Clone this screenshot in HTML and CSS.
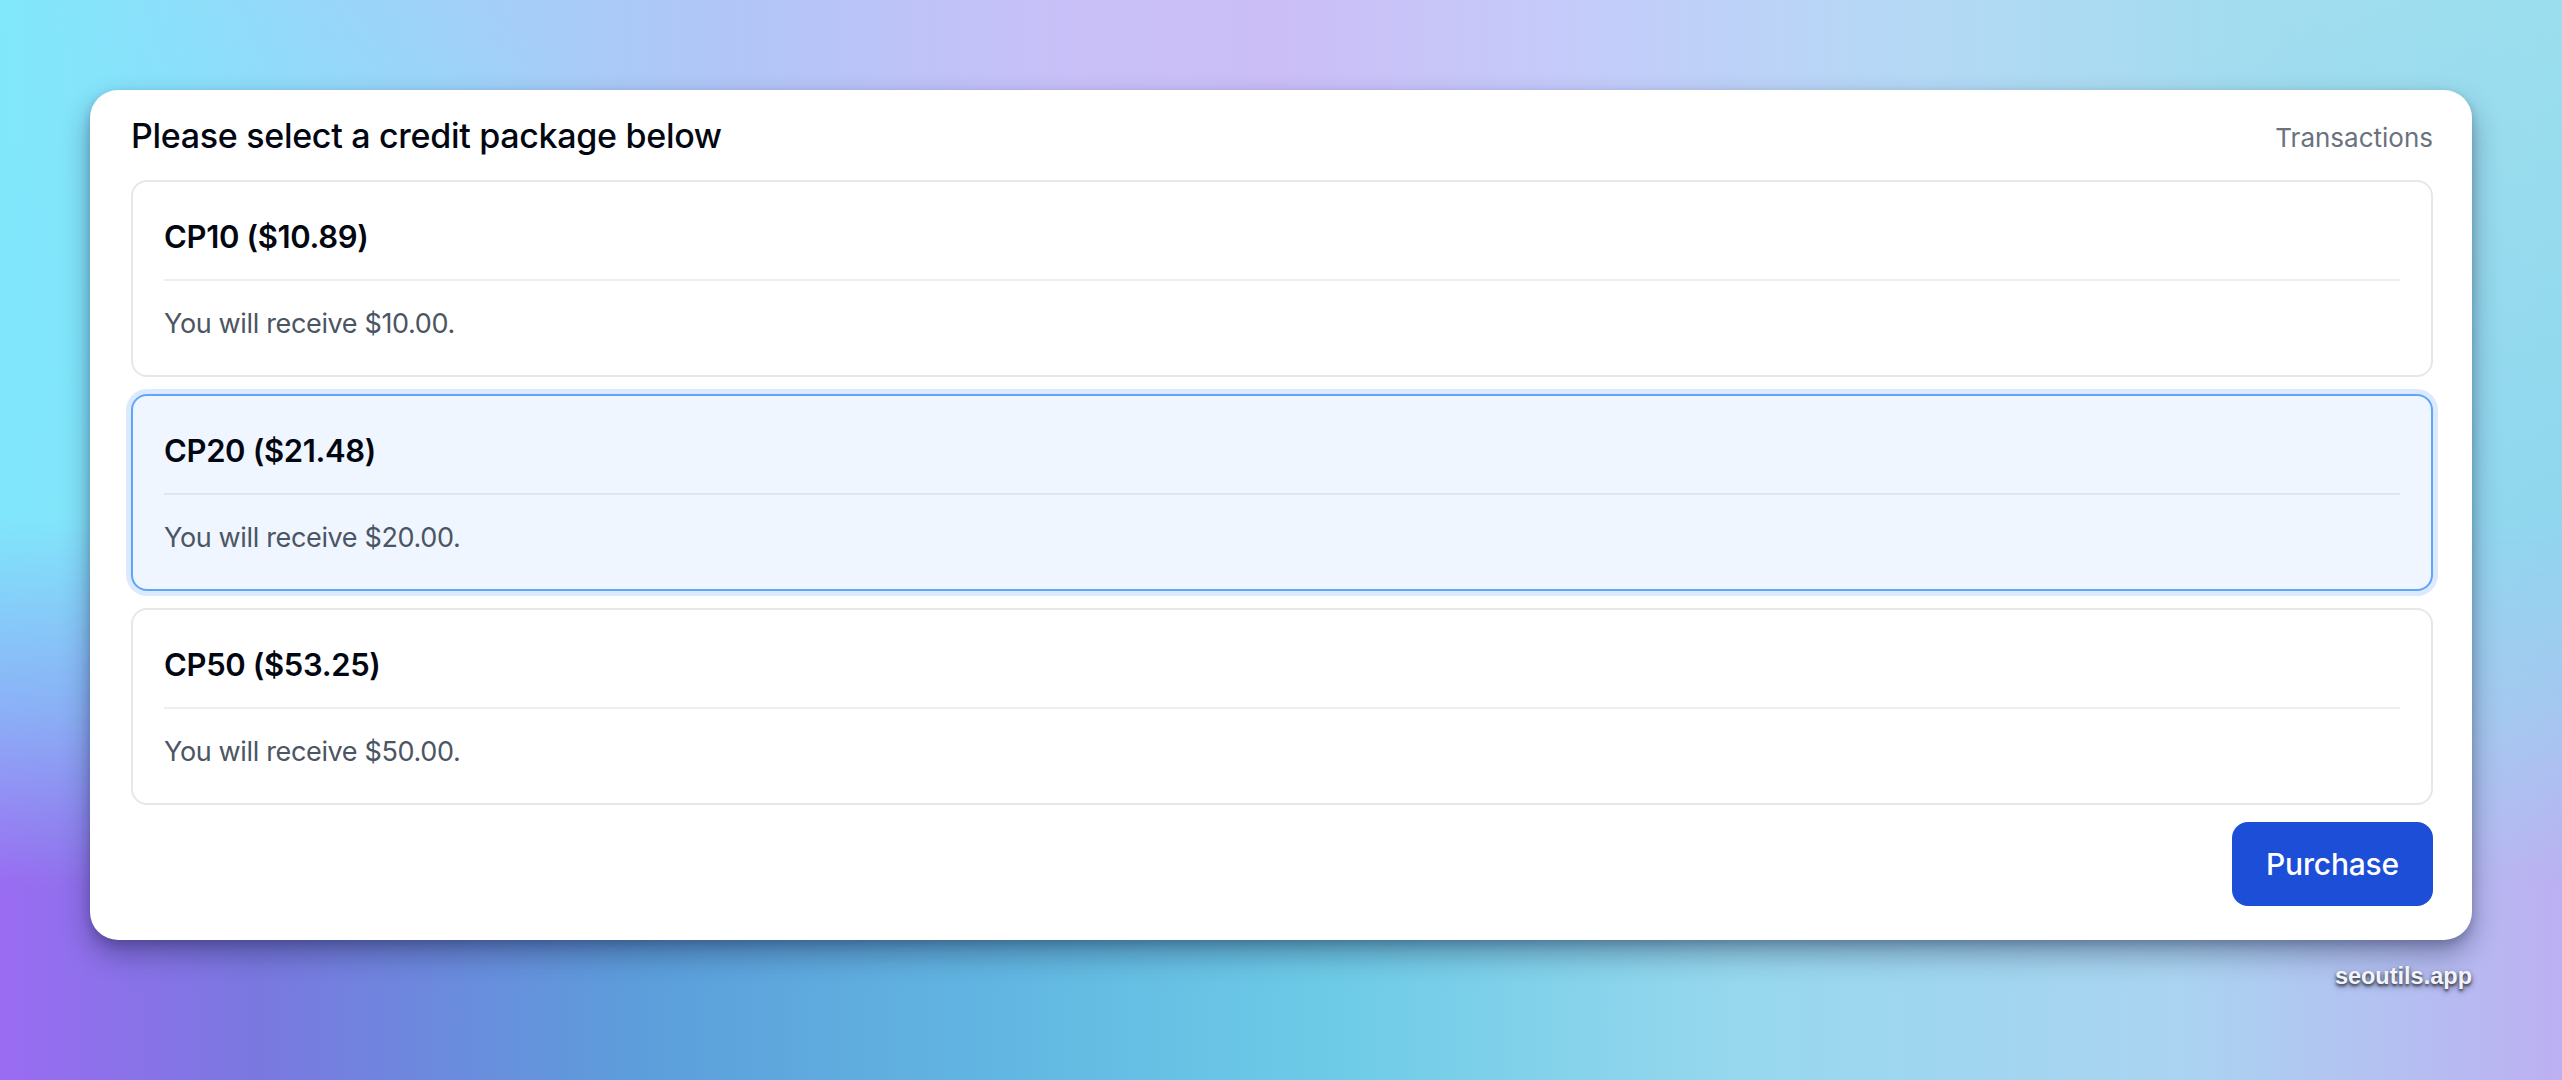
FILE: index.html
```
<!DOCTYPE html>
<html lang="en">
<head>
<meta charset="utf-8">
<title>Credit packages</title>
<link rel="stylesheet" href="styles.css">
</head>
<body>
<div class="bg-top"></div>
<main class="page">
  <section class="panel">
    <header class="panel-head">
      <h1 class="panel-title">Please select a credit package below</h1>
      <a class="panel-link" href="#">Transactions</a>
    </header>
    <div class="packages">
      <div class="package">
        <div class="package-name">CP10 ($10.89)</div>
        <div class="package-desc">You will receive $10.00.</div>
      </div>
      <div class="package package-selected">
        <div class="package-name">CP20 ($21.48)</div>
        <div class="package-desc">You will receive $20.00.</div>
      </div>
      <div class="package">
        <div class="package-name">CP50 ($53.25)</div>
        <div class="package-desc">You will receive $50.00.</div>
      </div>
    </div>
    <div class="panel-actions">
      <button class="btn-primary" type="button">Purchase</button>
    </div>
  </section>
  <div class="watermark">seoutils.app</div>
</main>
</body>
</html>
```
FILE: styles.css
```
html, body {
  margin: 0;
  padding: 0;
}
body {
  width: 2562px;
  height: 1080px;
  overflow: hidden;
  position: relative;
  font-family: Inter, "Noto Sans", sans-serif;
  background: linear-gradient(90deg, #9a6cf2 0%, #7a78e0 10%, #5c9edb 25%, #62b8e2 40%, #6dcbe7 52%, #97d8ee 68%, #aad4f1 85%, #bcb0f2 100%);
}
.bg-top {
  position: absolute;
  inset: 0;
  z-index: 0;
  background: linear-gradient(90deg, #80e8fb 0%, #9ad5f9 12%, #b0c6f7 28%, #c9c0f8 42%, #cbbef7 50%, #c4ccfa 62%, #b4d9f5 75%, #a2dcef 88%, #9ce0ee 100%);
  -webkit-mask-image: linear-gradient(180deg, #000 0%, #000 48%, rgba(0,0,0,0.55) 66%, transparent 82%);
  mask-image: linear-gradient(180deg, #000 0%, #000 48%, rgba(0,0,0,0.55) 66%, transparent 82%);
}
.bg-top::after {
  content: "";
  position: absolute;
  inset: 0;
  background: radial-gradient(ellipse 30% 45% at 0% 35%, #80e6fb 0%, rgba(128,230,251,0) 100%),
              radial-gradient(ellipse 25% 55% at 100% 50%, #8fd6ee 0%, rgba(143,214,238,0) 100%);
}
.page {
  position: relative;
  z-index: 1;
  width: 2382px;
  padding: 90px 0 0 90px;
  display: flex;
  flex-direction: column;
}
.panel {
  background: #fff;
  border-radius: 28px;
  padding: 18px 39px 34px 41px;
  box-shadow: 0 14px 28px rgba(20, 25, 60, 0.38), 0 4px 10px rgba(20, 25, 60, 0.2);
  display: flex;
  flex-direction: column;
}
.panel-head {
  display: flex;
  align-items: center;
  justify-content: space-between;
  height: 56px;
  margin-bottom: 16px;
}
.panel-title {
  margin: 0;
  font-size: 34px;
  font-weight: 500;
  line-height: 56px;
  color: #030712;
  letter-spacing: -0.3px;
}
.panel-link {
  font-size: 26px;
  line-height: 40px;
  color: #6b7280;
  text-decoration: none;
  margin-top: 3px;
}
.packages {
  display: flex;
  flex-direction: column;
  gap: 17px;
}
.package {
  border: 2px solid #e5e7eb;
  border-radius: 16px;
  padding: 31px;
  background: #fff;
}
.package-selected {
  background: #eff6ff;
  border-color: #60a5fa;
  box-shadow: 0 0 0 5px #dbeafe;
}
.package-name {
  font-size: 31px;
  font-weight: 600;
  line-height: 48px;
  color: #030712;
  padding-bottom: 18px;
  border-bottom: 2px solid rgba(17, 24, 39, 0.07);
  letter-spacing: -0.35px;
}
.package-desc {
  margin-top: 23px;
  font-size: 27px;
  line-height: 40px;
  color: #4b5563;
  letter-spacing: -0.35px;
}
.panel-actions {
  display: flex;
  justify-content: flex-end;
  margin-top: 17px;
}
.btn-primary {
  width: 201px;
  height: 84px;
  border: 0;
  border-radius: 16px;
  background: #1d4ed8;
  color: #fff;
  font-family: Inter, "Noto Sans", sans-serif;
  font-size: 30px;
  font-weight: 500;
  letter-spacing: -0.2px;
}
.watermark {
  align-self: flex-end;
  margin-top: 22px;
  font-family: "Liberation Sans", Arial, sans-serif;
  font-weight: 700;
  font-size: 23.5px;
  line-height: 28px;
  color: #f2f4fa;
  text-shadow: 0 2px 3px rgba(0, 0, 0, 0.65), 0 3px 6px rgba(0, 0, 0, 0.4);
}
```
